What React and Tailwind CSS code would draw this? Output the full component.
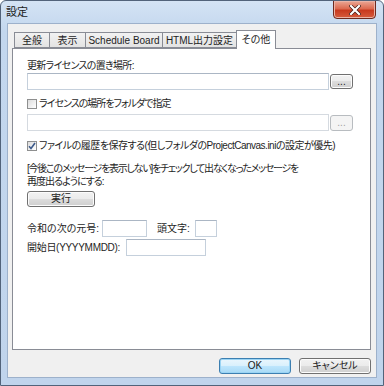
import React from "react";

const font = "font-['Liberation_Sans','Noto_Sans_CJK_JP',sans-serif] [font-feature-settings:'palt']";

function Btn({ children, className = "", disabled = false, def = false }) {
  return (
    <div
      className={
        "flex items-center justify-center rounded-[3px] border text-[10px] leading-none " +
        (disabled
          ? "border-[#b8bcc0] bg-[#f4f4f4] text-[#a0a0a0] "
          : def
          ? "border-[#3c7fb1] bg-[linear-gradient(#eaf6fd_0%,#d9f0fc_50%,#bee6fd_50%,#a7d9f5_100%)] shadow-[inset_0_0_0_1px_#9ad4f4] text-[#1a1a1a] "
          : "border-[#707070] bg-[linear-gradient(#f2f2f2_0%,#ebebeb_50%,#dddddd_50%,#cfcfcf_100%)] shadow-[inset_0_0_0_1px_#fcfcfc] text-[#1a1a1a] ") +
        className
      }
    >
      {children}
    </div>
  );
}

function Input({ className = "", disabled = false }) {
  return (
    <div
      className={
        "bg-white border " +
        (disabled
          ? "border-[#d5dae0] "
          : "border-[#c5d0dc] border-t-[#abb6c4] ") +
        className
      }
    />
  );
}

function Check({ checked }) {
  return (
    <div className="w-[10px] h-[10px] border border-[#8e8f8f] bg-[linear-gradient(135deg,#dcdcdc,#ffffff)] flex items-center justify-center shrink-0">
      {checked && (
        <svg width="8" height="8" viewBox="0 0 8 8">
          <path d="M1 4.2 L3 6.5 L7 1" fill="none" stroke="#3d5a8a" strokeWidth="1.6" />
        </svg>
      )}
    </div>
  );
}

export default function App() {
  return (
    <div className={"w-[384px] h-[386px] bg-white " + font}>
      <div className="relative w-[384px] h-[386px] flex flex-col border border-[#52637a] rounded-t-[6px] bg-[linear-gradient(#d4e3f4_0px,#c3d7ee_30px,#c0d4ec_100%)] overflow-hidden">
        {/* Title bar */}
        <div className="h-[22px] flex items-center pl-[5px] text-[11px] text-[#1a1a1a] leading-none">
          設定
        </div>
        {/* Close button */}
        <div className="absolute top-[-1px] right-[7px] w-[43px] h-[19px] rounded-b-[4px] border border-[#6e2a1f] bg-[linear-gradient(#eba896_0%,#dc6a50_45%,#c83a1f_55%,#d65c3e_100%)] flex items-center justify-center shadow-[inset_0_0_0_1px_#eab3a6]">
          <svg width="12" height="10" viewBox="0 0 12 10">
            <path d="M2 1 L10 9 M10 1 L2 9" stroke="#3a1410" strokeWidth="3.4" strokeLinecap="square" />
            <path d="M2 1 L10 9 M10 1 L2 9" stroke="#ffffff" strokeWidth="2.2" strokeLinecap="square" />
          </svg>
        </div>
        {/* Client */}
        <div className="mx-[6px] mb-[7px] flex-1 bg-[#f0f0f0] border border-[#9db1cb] flex flex-col pt-[6px] pl-[4px] pr-[5px] text-[#1e1e1e]">
          {/* Tabs */}
          <div className="h-[18px] flex items-end ml-[2px] relative z-10 text-[10px] leading-none">
            <div className="w-[35px] h-[16px] border border-r-0 border-[#898c95] bg-[linear-gradient(#f2f2f2,#e3e3e3)] flex items-center justify-center pt-[1px]">全般</div>
            <div className="w-[36px] h-[16px] border border-r-0 border-[#898c95] bg-[linear-gradient(#f2f2f2,#e3e3e3)] flex items-center justify-center pt-[1px]">表示</div>
            <div className="w-[77px] h-[16px] border border-r-0 border-[#898c95] bg-[linear-gradient(#f2f2f2,#e3e3e3)] flex items-center justify-center pt-[1px]">Schedule Board</div>
            <div className="w-[75px] h-[16px] border border-[#898c95] bg-[linear-gradient(#f2f2f2,#e3e3e3)] flex items-center justify-center pt-[1px]">HTML出力設定</div>
            <div className="w-[40px] h-[19px] -mb-px -ml-px border border-b-0 border-[#898c95] bg-white flex items-center justify-center pb-[1px]">その他</div>
          </div>
          {/* Panel */}
          <div className="h-[302px] bg-white border border-[#898c95] flex flex-col pl-[14px] text-[10px] leading-[12px]">
            <div className="mt-[11px] tracking-[-0.7px]">更新ライセンスの置き場所:</div>
            <div className="mt-[1px] flex items-center">
              <Input className="w-[302px] h-[17px]" />
              <Btn className="ml-[1px] w-[23px] h-[15px] text-[8px]">...</Btn>
            </div>
            <div className="mt-[8px] flex items-center gap-[2px]">
              <Check />
              <span className="tracking-[-1px]">ライセンスの場所をフォルダで指定</span>
            </div>
            <div className="mt-[4px] flex items-center">
              <Input disabled className="w-[302px] h-[17px]" />
              <Btn disabled className="ml-[1px] w-[23px] h-[16px] text-[8px]">...</Btn>
            </div>
            <div className="mt-[9px] flex items-center gap-[2px]">
              <Check checked />
              <span className="tracking-[-0.5px]">ファイルの履歴を保存する(但しフォルダのProjectCanvas.iniの設定が優先)</span>
            </div>
            <div className="mt-[10px] leading-[13px]">
              <div className="tracking-[-1.25px]">[今後このメッセージを表示しない]をチェックして出なくなったメッセージを</div>
              <div className="tracking-[-1px]">再度出るようにする:</div>
            </div>
            <Btn className="mt-[3px] w-[68px] h-[16px]">実行</Btn>
            <div className="mt-[13px] flex items-center">
              <div className="w-[75px]">令和の次の元号:</div>
              <Input className="w-[45px] h-[17px]" />
              <div className="ml-[10px] w-[38px]">頭文字:</div>
              <Input className="w-[22px] h-[17px]" />
            </div>
            <div className="mt-[2px] flex items-center">
              <div className="w-[99px] tracking-[-0.3px]">開始日(YYYYMMDD):</div>
              <Input className="w-[80px] h-[17px]" />
            </div>
          </div>
          {/* Buttons */}
          <div className="mt-[8px] flex justify-end gap-[8px]">
            <Btn def className="w-[72px] h-[16px]">OK</Btn>
            <Btn className="w-[72px] h-[16px]">キャンセル</Btn>
          </div>
        </div>
      </div>
    </div>
  );
}
